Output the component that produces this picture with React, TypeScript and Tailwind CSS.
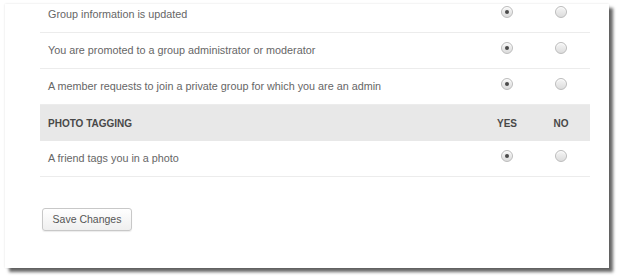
const GROUP_ROWS = [
  { id: 1, label: 'Group information is updated', yes: true },
  { id: 2, label: 'You are promoted to a group administrator or moderator', yes: true },
  { id: 3, label: 'A member requests to join a private group for which you are an admin', yes: true },
];

const PHOTO_ROWS = [{ id: 4, label: 'A friend tags you in a photo', yes: true }];

function Radio({ checked }: { checked: boolean }) {
  return (
    <span className="-mt-[6px] flex h-[12px] w-[12px] items-center justify-center rounded-full border border-[#bcbcbc] bg-gradient-to-b from-[#f6f6f6] to-[#dcdcdc] shadow-[inset_0_1px_1px_rgba(255,255,255,0.8)]">
      {checked && <span className="h-[4px] w-[4px] rounded-full bg-[#4a4a4a]" />}
    </span>
  );
}

function Row({ label, yes }: { label: string; yes: boolean }) {
  return (
    <div className="flex h-[36px] items-center border-b border-[#ececec]">
      <div className="flex-1 pl-2 text-[10.8px] text-[#666]">{label}</div>
      <div className="flex w-[50px] justify-center">
        <Radio checked={yes} />
      </div>
      <div className="flex w-[58px] justify-center">
        <Radio checked={!yes} />
      </div>
    </div>
  );
}

export default function App() {
  return (
    <div className="h-[279px] w-[620px] overflow-hidden bg-white pl-[5px] pt-[4px] font-['Liberation_Sans',Arial,sans-serif]">
      <div className="h-[264px] w-[604px] overflow-hidden bg-white pl-[35px] pr-[19px] shadow-[0_0_2px_rgba(0,0,0,0.12),4px_4px_3px_rgba(0,0,0,0.6)]">
        <div className="-mt-[7px]">
          {GROUP_ROWS.map((row) => (
            <Row key={row.id} label={row.label} yes={row.yes} />
          ))}
          <div className="flex h-[36px] items-center bg-[#e8e8e8] text-[10px] font-bold text-[#484848]">
            <div className="flex-1 pl-2">PHOTO TAGGING</div>
            <div className="w-[50px] text-center">YES</div>
            <div className="w-[58px] text-center">NO</div>
          </div>
          {PHOTO_ROWS.map((row) => (
            <Row key={row.id} label={row.label} yes={row.yes} />
          ))}
        </div>
        <button className="ml-[2px] mt-[31px] h-[23px] w-[90px] rounded-[3px] border border-[#c8c8c8] bg-gradient-to-b from-white to-[#efefef] text-[10.5px] text-[#555] shadow-[0_1px_1px_rgba(0,0,0,0.08)]">
          Save Changes
        </button>
      </div>
    </div>
  );
}
